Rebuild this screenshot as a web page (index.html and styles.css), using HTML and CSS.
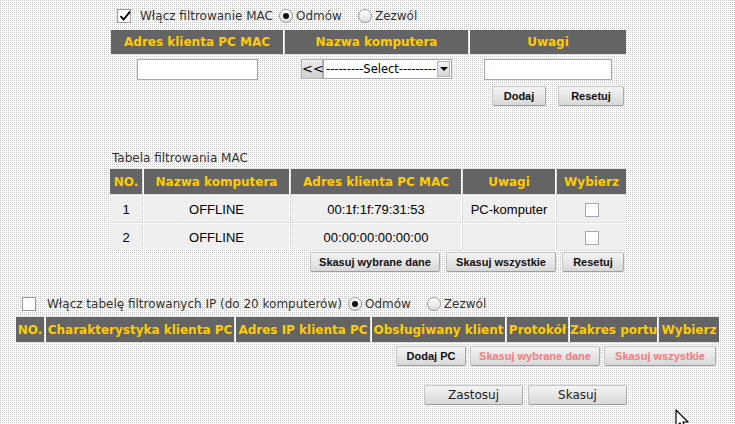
FILE: index.html
```html
<!DOCTYPE html>
<html lang="pl">

<head>
    <meta charset="utf-8">
    <title>Filtrowanie MAC</title>
    <link rel="stylesheet" href="styles.css">
</head>

<body>
    <div class="mac">
        <div class="opt">
            <span class="cb on"><svg width="14" height="14" viewBox="0 0 14 14"><path d="M2.5 7.2 L5.6 10.6 L12 2.6" fill="none" stroke="#000" stroke-width="1.8"/></svg></span>
            <span class="lbl first">Włącz filtrowanie MAC</span>
            <span class="rd on"></span><span class="lbl">Odmów</span>
            <span class="rd"></span><span class="lbl">Zezwól</span>
        </div>

        <table class="grid add">
            <colgroup><col style="width:172px"><col style="width:183px"><col style="width:156px"></colgroup>
            <tr>
                <th>Adres klienta PC MAC</th>
                <th>Nazwa komputera</th>
                <th>Uwagi</th>
            </tr>
            <tr>
                <td><input type="text" class="txt mac-in"></td>
                <td>
                    <span class="pick"><span class="ltlt">&lt;&lt;</span><span class="sel">---------Select---------<span class="arr"></span></span></span>
                </td>
                <td><input type="text" class="txt note-in"></td>
            </tr>
        </table>
        <div class="btns">
            <button class="btn w54">Dodaj</button>
            <button class="btn w66 gap12">Resetuj</button>
        </div>

        <div class="caption">Tabela filtrowania MAC</div>
        <table class="grid list">
            <colgroup><col style="width:32px"><col style="width:145px"><col style="width:170px"><col style="width:92px"><col style="width:69px"></colgroup>
            <tr>
                <th>NO.</th>
                <th>Nazwa komputera</th>
                <th>Adres klienta PC MAC</th>
                <th>Uwagi</th>
                <th>Wybierz</th>
            </tr>
            <tr>
                <td>1</td>
                <td>OFFLINE</td>
                <td>00:1f:1f:79:31:53</td>
                <td>PC-komputer</td>
                <td><span class="cb small"></span></td>
            </tr>
            <tr>
                <td>2</td>
                <td>OFFLINE</td>
                <td>00:00:00:00:00:00</td>
                <td></td>
                <td><span class="cb small"></span></td>
            </tr>
        </table>
        <div class="btns flush">
            <button class="btn w130">Skasuj wybrane dane</button>
            <button class="btn w110 gap6">Skasuj wszystkie</button>
            <button class="btn w62 gap6">Resetuj</button>
        </div>
    </div>

    <div class="ip">
        <div class="opt">
            <span class="cb"></span>
            <span class="lbl first wide">Włącz tabelę filtrowanych IP (do 20 komputerów)</span>
            <span class="rd on"></span><span class="lbl">Odmów</span>
            <span class="rd"></span><span class="lbl">Zezwól</span>
        </div>
        <table class="grid iplist">
            <colgroup><col style="width:28px"><col style="width:188px"><col style="width:134px"><col style="width:133px"><col style="width:61px"><col style="width:87px"><col style="width:60px"></colgroup>
            <tr>
                <th>NO.</th>
                <th>Charakterystyka klienta PC</th>
                <th>Adres IP klienta PC</th>
                <th>Obsługiwany klient</th>
                <th>Protokół</th>
                <th>Zakres portu</th>
                <th>Wybierz</th>
            </tr>
        </table>
        <div class="btns">
            <button class="btn w70">Dodaj PC</button>
            <button class="btn w130 gap4 off">Skasuj wybrane dane</button>
            <button class="btn w112 gap4 off">Skasuj wszystkie</button>
        </div>
    </div>

    <div class="apply">
        <button class="btn big">Zastosuj</button>
        <button class="btn big gap5">Skasuj</button>
    </div>

    <svg class="pointer" width="16" height="24" viewBox="0 0 16 24"><path d="M1 1 L1 18 L5 14 L8 21 L11 20 L8 13 L13 13 Z" fill="#fff" stroke="#000" stroke-width="1.2" stroke-linejoin="round"/></svg>
</body>

</html>
```

FILE: styles.css
```css
body {
    margin: 0;
    height: 424px;
    overflow: hidden;
    position: relative;
    font-family: "DejaVu Sans", Verdana, sans-serif;
    font-size: 12px;
    color: #333;
    background-color: #c9c9c9;
    background-image:
        linear-gradient(90deg, transparent 1px, #fff 1px),
        linear-gradient(transparent 1px, #fff 1px);
    background-size: 2px 2px;
}

.mac {
    margin-left: 111px;
    width: 516px;
}

.opt {
    display: flex;
    align-items: center;
    height: 20px;
    padding-top: 6px;
}

.ip .opt {
    padding-top: 0;
    margin-top: 22px;
}

.mac .opt .cb {
    margin-left: 6px;
}

.ip .opt .cb {
    margin-left: 6px;
}

.lbl {
    margin-left: 3px;
    margin-right: 16px;
    white-space: nowrap;
}

.lbl.first {
    margin-left: 9px;
    margin-right: 6px;
}

.lbl.wide {
    margin-left: 11px;
    margin-right: 6px;
}

/* checkbox / radio */
.cb {
    display: inline-block;
    width: 14px;
    height: 14px;
    box-sizing: border-box;
    border: 1px solid #9a9a9a;
    background: #fff;
    position: relative;
}

.cb svg {
    position: absolute;
    left: 0;
    top: -1px;
}

.cb.small {
    border-color: #a4a8b4;
    vertical-align: middle;
}

.rd {
    display: inline-block;
    width: 14px;
    height: 14px;
    box-sizing: border-box;
    border: 1px solid #9a9a9a;
    border-radius: 50%;
    background: linear-gradient(#fff, #dcdcdc);
    position: relative;
}

.rd.on::after {
    content: "";
    position: absolute;
    left: 3px;
    top: 3px;
    width: 6px;
    height: 6px;
    border-radius: 50%;
    background: #111;
}

/* tables */
.grid {
    border-collapse: separate;
    border-spacing: 2px;
    table-layout: fixed;
}

.grid th {
    background-color: #646464;
    color: #ffcc00;
    font-weight: bold;
    font-size: 12px;
    height: 25px;
    padding: 0;
    text-align: center;
    white-space: nowrap;
}

.grid td {
    padding: 0;
    text-align: center;
    font-family: "Liberation Sans", Arial, sans-serif;
    font-size: 13px;
    color: #000;
}

.add {
    width: 519px;
    margin: 2px 0 0 -2px;
}

.add th {
    height: 24px;
}

.add td {
    height: 26px;
}

.list {
    width: 520px;
    margin-left: -3px;
}

.list td {
    height: 26px;
    background-color: #efefef;
}

.iplist {
    width: 707px;
    margin: 1px 0 0 -2px;
}

.txt {
    box-sizing: border-box;
    height: 21px;
    border: 1px solid #a4a8b4;
    background: #fff;
    padding: 0 3px;
    margin: 0;
    vertical-align: middle;
}

.mac-in {
    width: 121px;
}

.note-in {
    width: 128px;
}

.pick {
    display: inline-flex;
    align-items: stretch;
    height: 20px;
    vertical-align: middle;
    font-family: "DejaVu Sans", sans-serif;
    color: #000;
}

.ltlt {
    width: 22px;
    box-sizing: border-box;
    border: 1px solid #b4b4b4;
    background: linear-gradient(#ececec, #cfcfcf);
    font-size: 13px;
    line-height: 18px;
    text-align: center;
}

.sel {
    width: 129px;
    box-sizing: border-box;
    border: 1px solid #a4a8b4;
    background: #fff;
    font-size: 11.5px;
    line-height: 18px;
    padding-left: 2px;
    text-align: left;
    position: relative;
    white-space: nowrap;
    overflow: hidden;
}

.arr {
    position: absolute;
    right: 1px;
    top: 1px;
    width: 13px;
    height: 16px;
    box-sizing: border-box;
    border: 1px solid #b4b4b4;
    background: linear-gradient(#f0f0f0, #d6d6d6);
}

.arr::after {
    content: "";
    position: absolute;
    left: 2px;
    top: 5px;
    border-left: 4px solid transparent;
    border-right: 4px solid transparent;
    border-top: 4px solid #000;
}

.caption {
    margin-top: 44px;
    height: 17px;
    line-height: 16px;
    padding-left: 1px;
}

/* buttons */
.btns {
    display: flex;
    justify-content: flex-end;
    padding-right: 3px;
    margin-top: 2px;
}

.btns.flush {
    margin-top: 0;
}

.btn {
    box-sizing: border-box;
    height: 20px;
    padding: 0;
    margin: 0;
    border: 1px solid #c6c6c6;
    border-bottom-color: #9e9e9e;
    border-right-color: #aaaaaa;
    border-radius: 2px;
    background: linear-gradient(#f4f4f4, #d8d8d8);
    font-family: "Liberation Sans", Arial, sans-serif;
    font-weight: bold;
    font-size: 11px;
    color: #111;
}

.btn.off {
    color: #ee8080;
}

.w54 { width: 54px; }
.w62 { width: 62px; }
.w66 { width: 66px; }
.w70 { width: 70px; }
.w110 { width: 110px; }
.w112 { width: 112px; }
.w130 { width: 130px; }

.gap4 { margin-left: 4px; }
.gap5 { margin-left: 5px; }
.gap6 { margin-left: 6px; }
.gap12 { margin-left: 12px; }

.ip {
    margin-left: 16px;
    width: 703px;
}

.apply {
    display: flex;
    margin: 19px 0 0 424px;
}

.btn.big {
    width: 99px;
    height: 20px;
    font-family: "DejaVu Sans", Verdana, sans-serif;
    font-weight: normal;
    font-size: 12px;
    color: #222;
}

.pointer {
    position: absolute;
    left: 675px;
    top: 409px;
}
```
